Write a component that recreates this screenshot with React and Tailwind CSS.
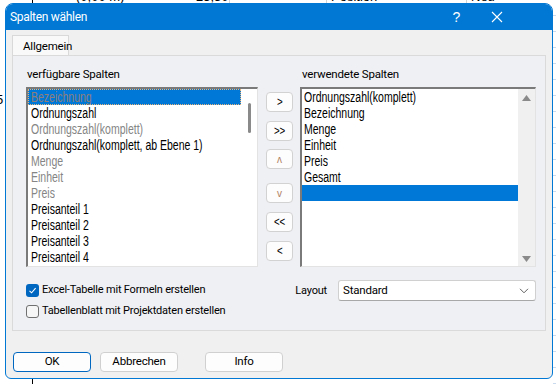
import React from "react";

const available = [
  { t: "Bezeichnung", off: true, sel: true },
  { t: "Ordnungszahl" },
  { t: "Ordnungszahl(komplett)", off: true },
  { t: "Ordnungszahl(komplett, ab Ebene 1)" },
  { t: "Menge", off: true },
  { t: "Einheit", off: true },
  { t: "Preis", off: true },
  { t: "Preisanteil 1" },
  { t: "Preisanteil 2" },
  { t: "Preisanteil 3" },
  { t: "Preisanteil 4" },
  { t: "Preisanteil gesamt" },
];

const used = ["Ordnungszahl(komplett)", "Bezeichnung", "Menge", "Einheit", "Preis", "Gesamt"];

const moveButtons = [
  { label: ">", mt: "mt-[5px]" },
  { label: ">>", mt: "mt-[9px]" },
  { label: "ʌ", mt: "mt-[8px]", dim: true },
  { label: "v", mt: "mt-[14px]", dim: true },
  { label: "<<", mt: "mt-[9px]" },
  { label: "<", mt: "mt-[9px]" },
];

function Backdrop() {
  return (
    <div className="absolute inset-0 font-['Liberation_Sans',sans-serif] text-[13px] text-black">
      <div className="absolute left-[32px] top-0 h-full w-px bg-black" />
      <div className="absolute left-[229px] top-0 h-[4px] w-px bg-[#d4d4d4]" />
      <div className="absolute left-[326px] top-0 h-[4px] w-px bg-[#d4d4d4]" />
      <div className="absolute left-[466px] top-0 h-[4px] w-px bg-[#d4d4d4]" />
      <div className="absolute left-[76px] top-[-10px] leading-[14px]">(0,00 m)</div>
      <div className="absolute left-[196px] top-[-10px] leading-[14px]">23,30</div>
      <div className="absolute left-[331px] top-[-10px] leading-[14px]">Position</div>
      <div className="absolute left-[471px] top-[-10px] leading-[14px]">Neu</div>
      <div className="absolute left-[-4px] top-[93px] leading-[14px]">5</div>
      <div className="absolute right-0 top-0 h-full w-[3px] bg-[repeating-linear-gradient(to_bottom,#ffffff_0px,#ffffff_15px,#c9d9ee_15px,#c9d9ee_16px)]" />
    </div>
  );
}

// the list font is a condensed face; none is installed, so squeeze Liberation Sans
function Narrow({ children }) {
  return <span className="inline-block origin-left scale-x-[0.75] whitespace-nowrap">{children}</span>;
}

function ListRow({ item }) {
  return (
    <div
      className={
        "h-[16px] leading-[16px] pl-[3px] whitespace-nowrap " +
        (item.sel ? "bg-[#0078d7] outline outline-1 outline-dotted outline-[#e9b47c] -outline-offset-1 " : "") +
        (item.off ? (item.sel ? "text-[#8f7f7a]" : "text-[#858585]") : "text-black")
      }
    >
      <Narrow>{item.t}</Narrow>
    </div>
  );
}

export default function App() {
  return (
    <div className="relative w-[556px] h-[384px] bg-white overflow-hidden">
      <Backdrop />

      <div className="absolute left-[5px] top-[3px] w-[548px] h-[376px] flex flex-col rounded-t-[8px] rounded-b-[6px] border border-[#0078d4] bg-[#f0f0f0] overflow-hidden font-['Segoe_UI',Roboto,sans-serif] text-[11px] tracking-[-0.2px] text-black">
        {/* title bar */}
        <div className="h-[26px] shrink-0 bg-[#0078d4] text-white flex items-center pl-[4px]">
          <span className="text-[12px] tracking-[-0.3px]">Spalten wählen</span>
          <span className="ml-auto mr-[31px] text-[14px] font-['Liberation_Sans',sans-serif]">?</span>
          <svg width="12" height="12" viewBox="0 0 12 12" className="mr-[49px]">
            <path d="M1 1 L11 11 M11 1 L1 11" stroke="white" strokeWidth="1.1" fill="none" />
          </svg>
        </div>

        <div className="flex-1 px-[6px] pt-[5px]">
          {/* tab */}
          <div className="w-[57px] h-[21px] border border-b-0 border-[#d9d9d9] bg-[#f9f9f9] pl-[10px] leading-[20px] text-[11.5px]">
            Allgemein
          </div>

          {/* panel */}
          <div className="h-[276px] -mt-px border border-[#dadada] bg-[#eff0f4] pl-[13px] pt-[10px]">
            <div className="flex text-[11.5px]">
              <div className="w-[232px]">
                <div className="h-[16px] leading-[16px] pl-[1px]">verfügbare Spalten</div>
              </div>
              <div className="w-[42px]" />
              <div className="w-[236px]">
                <div className="h-[16px] leading-[16px] pl-[2px]">verwendete Spalten</div>
              </div>
            </div>

            <div className="flex mt-[5px]">
              {/* left list */}
              <div className="w-[232px] h-[180px] flex bg-white border-t-2 border-l-2 border-[#7a7a7a] border-r border-b border-r-[#e3e3e3] border-b-[#e3e3e3] overflow-hidden font-['Liberation_Sans',sans-serif] text-[14px] tracking-normal">
                <div className="w-[213px] overflow-hidden">
                  {available.map((item) => (
                    <ListRow key={item.t} item={item} />
                  ))}
                </div>
                <div className="flex-1 flex justify-center pt-[14px]">
                  <div className="w-[3px] h-[30px] rounded-full bg-[#8a8a8a]" />
                </div>
              </div>

              {/* move buttons */}
              <div className="w-[27px] ml-[8px] flex flex-col font-['Liberation_Sans',sans-serif] tracking-normal">
                {moveButtons.map((b) => (
                  <div
                    key={b.label}
                    className={
                      b.mt +
                      " h-[20px] rounded-[4px] border border-[#d2d2d2] bg-[#fdfdfd] flex items-center justify-center " +
                      (b.dim ? "text-[10px] text-[#b07f64]" : "text-[13px] text-black")
                    }
                  >
                    <span className={b.dim ? "" : "inline-block scale-x-[0.75]"}>{b.label}</span>
                  </div>
                ))}
              </div>

              {/* right list */}
              <div className="w-[236px] h-[180px] ml-[7px] flex bg-white border-t-2 border-l-2 border-[#7a7a7a] border-r border-b border-r-[#e3e3e3] border-b-[#e3e3e3] overflow-hidden font-['Liberation_Sans',sans-serif] text-[14px] tracking-normal">
                <div className="w-[216px] overflow-hidden">
                  {used.map((t) => (
                    <div key={t} className="h-[16px] leading-[16px] pl-[2px] whitespace-nowrap">
                      <Narrow>{t}</Narrow>
                    </div>
                  ))}
                  <div className="h-[16px] bg-[#0078d7]" />
                </div>
                <div className="flex-1 bg-[#f0f0f0] flex flex-col items-center justify-between pt-[6px] pb-[4px]">
                  <svg width="9" height="6" viewBox="0 0 9 6">
                    <path d="M4.5 0 L9 6 L0 6 Z" fill="#8a8a8a" />
                  </svg>
                  <svg width="9" height="6" viewBox="0 0 9 6">
                    <path d="M0 0 L9 0 L4.5 6 Z" fill="#8a8a8a" />
                  </svg>
                </div>
              </div>
            </div>

            {/* options */}
            <div className="flex mt-[13px] pr-[9px]">
              <div className="flex flex-col">
                <div className="h-[21px] flex items-center">
                  <div className="w-[13px] h-[13px] rounded-[3px] bg-[#0067c0] flex items-center justify-center">
                    <svg width="9" height="9" viewBox="0 0 9 9">
                      <path d="M1.5 4.8 L3.6 6.8 L7.6 2.2" stroke="white" strokeWidth="1.1" fill="none" />
                    </svg>
                  </div>
                  <span className="ml-[3px]">Excel-Tabelle mit Formeln erstellen</span>
                </div>
                <div className="h-[21px] flex items-center">
                  <div className="w-[13px] h-[13px] rounded-[3px] border border-[#707070] bg-[#f6f6f6]" />
                  <span className="ml-[3px]">Tabellenblatt mit Projektdaten erstellen</span>
                </div>
              </div>
              <div className="ml-auto flex items-start">
                <span className="h-[21px] leading-[21px] mr-[11px]">Layout</span>
                <div className="w-[198px] h-[21px] rounded-[3px] border border-[#d0d0d0] border-b-[#a8a8a8] bg-white flex items-center pl-[4px] pr-[6px]">
                  <span className="text-[11.5px]">Standard</span>
                  <svg width="10" height="6" viewBox="0 0 10 6" className="ml-auto">
                    <path d="M1 0.8 L5 4.8 L9 0.8" stroke="#606060" strokeWidth="1" fill="none" />
                  </svg>
                </div>
              </div>
            </div>
          </div>

          {/* dialog buttons */}
          <div className="flex mt-[21px] ml-[1px] text-[11.5px]">
            <div className="w-[78px] h-[20px] rounded-[4px] border border-[#0067c0] bg-[#fdfdfd] flex items-center justify-center">
              OK
            </div>
            <div className="w-[78px] h-[20px] ml-[9px] rounded-[4px] border border-[#d0d0d0] bg-[#fdfdfd] flex items-center justify-center">
              Abbrechen
            </div>
            <div className="w-[78px] h-[20px] ml-[27px] rounded-[4px] border border-[#d0d0d0] bg-[#fdfdfd] flex items-center justify-center">
              Info
            </div>
          </div>
        </div>
      </div>
    </div>
  );
}
